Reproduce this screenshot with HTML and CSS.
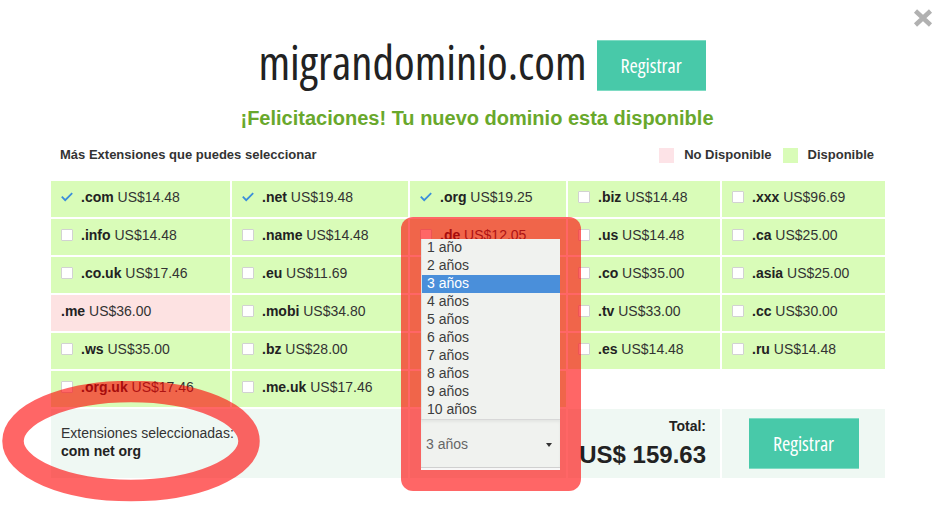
FILE: index.html
```html
<!DOCTYPE html>
<html lang="es">
<head>
    <meta charset="UTF-8">
    <title>Dominio disponible</title>
    <link rel="stylesheet" href="styles.css">
</head>
<body>
    <a class="close" href="#">
        <svg width="20" height="18" viewBox="0 0 20 18"><path d="M2.5 2 L17.5 16 M17.5 2 L2.5 16" stroke="#b1b1b1" stroke-width="4.5" fill="none"/></svg>
    </a>

    <div class="modal">
        <div class="head">
            <h1 class="domain">migrandominio.com</h1>
            <button class="btn">Registrar</button>
        </div>
        <p class="congrats">¡Felicitaciones! Tu nuevo dominio esta disponible</p>

        <div class="legend-row">
            <span>Más Extensiones que puedes seleccionar</span>
            <div class="legend">
                <span class="swatch no"></span><span>No Disponible</span>
                <span class="swatch yes"></span><span>Disponible</span>
            </div>
        </div>

        <!-- extension grid, row by row -->
        <div class="ext-grid">
            <div class="cell"><span class="tick"><svg width="12" height="12" viewBox="0 0 12 12"><path d="M0.8 5.6 L4.2 9.2 L11.2 2.2" stroke="#3a8edb" stroke-width="1.8" fill="none"/></svg></span><b>.com</b>&nbsp;US$14.48</div>
            <div class="cell"><span class="tick"><svg width="12" height="12" viewBox="0 0 12 12"><path d="M0.8 5.6 L4.2 9.2 L11.2 2.2" stroke="#3a8edb" stroke-width="1.8" fill="none"/></svg></span><b>.net</b>&nbsp;US$19.48</div>
            <div class="cell"><span class="tick"><svg width="12" height="12" viewBox="0 0 12 12"><path d="M0.8 5.6 L4.2 9.2 L11.2 2.2" stroke="#3a8edb" stroke-width="1.8" fill="none"/></svg></span><b>.org</b>&nbsp;US$19.25</div>
            <div class="cell"><span class="box"></span><b>.biz</b>&nbsp;US$14.48</div>
            <div class="cell"><span class="box"></span><b>.xxx</b>&nbsp;US$96.69</div>

            <div class="cell"><span class="box"></span><b>.info</b>&nbsp;US$14.48</div>
            <div class="cell"><span class="box"></span><b>.name</b>&nbsp;US$14.48</div>
            <div class="cell"><span class="box"></span><b>.de</b>&nbsp;US$12.05</div>
            <div class="cell"><span class="box"></span><b>.us</b>&nbsp;US$14.48</div>
            <div class="cell"><span class="box"></span><b>.ca</b>&nbsp;US$25.00</div>

            <div class="cell"><span class="box"></span><b>.co.uk</b>&nbsp;US$17.46</div>
            <div class="cell"><span class="box"></span><b>.eu</b>&nbsp;US$11.69</div>
            <div class="cell"></div>
            <div class="cell"><span class="box"></span><b>.co</b>&nbsp;US$35.00</div>
            <div class="cell"><span class="box"></span><b>.asia</b>&nbsp;US$25.00</div>

            <div class="cell taken"><b>.me</b>&nbsp;US$36.00</div>
            <div class="cell"><span class="box"></span><b>.mobi</b>&nbsp;US$34.80</div>
            <div class="cell"></div>
            <div class="cell"><span class="box"></span><b>.tv</b>&nbsp;US$33.00</div>
            <div class="cell"><span class="box"></span><b>.cc</b>&nbsp;US$30.00</div>

            <div class="cell"><span class="box"></span><b>.ws</b>&nbsp;US$35.00</div>
            <div class="cell"><span class="box"></span><b>.bz</b>&nbsp;US$28.00</div>
            <div class="cell"></div>
            <div class="cell"><span class="box"></span><b>.es</b>&nbsp;US$14.48</div>
            <div class="cell"><span class="box"></span><b>.ru</b>&nbsp;US$14.48</div>

            <div class="cell"><span class="box"></span><b>.org.uk</b>&nbsp;US$17.46</div>
            <div class="cell"><span class="box"></span><b>.me.uk</b>&nbsp;US$17.46</div>
            <div class="cell"></div>

            <!-- summary row -->
            <div class="sum sum-text">
                <span>Extensiones seleccionadas:</span>
                <b>com net org</b>
            </div>
            <div class="sum">
                <div class="select">
                    <ul class="options">
                        <li>1 año</li>
                        <li>2 años</li>
                        <li class="active">3 años</li>
                        <li>4 años</li>
                        <li>5 años</li>
                        <li>6 años</li>
                        <li>7 años</li>
                        <li>8 años</li>
                        <li>9 años</li>
                        <li>10 años</li>
                    </ul>
                    <div class="select-box">
                        <span>3 años</span>
                        <span class="caret"></span>
                    </div>
                </div>
            </div>
            <div class="sum total">
                <div class="total-label">Total:</div>
                <div class="total-value">US$ 159.63</div>
            </div>
            <div class="sum sum-btn">
                <button class="btn">Registrar</button>
            </div>
        </div>
    </div>

    <!-- review marks drawn over the page -->
    <div class="mark-box"></div>
    <svg class="mark-ring" width="270" height="130" viewBox="0 0 270 130">
        <ellipse cx="131" cy="60" rx="118" ry="49.5" fill="none" stroke="rgba(255,0,0,0.6)" stroke-width="21.5"/>
    </svg>
</body>
</html>
```

FILE: styles.css
```css
body {
    margin: 0;
    font-family: "Liberation Sans", Arial, sans-serif;
    color: #333;
    background: #fff;
}
.close {
    position: absolute;
    top: 9px;
    right: 3px;
    width: 20px;
    height: 18px;
}
.close svg {
    display: block;
}
.modal {
    width: 834px;
    margin: 0 auto;
    padding-top: 40px;
}
.head {
    display: flex;
    justify-content: center;
    align-items: flex-start;
    gap: 10px;
    padding-left: 28px;
}
.domain {
    margin: -3px 0 0;
    font-family: "Open Sans", sans-serif;
    font-stretch: 75%;
    font-weight: normal;
    font-size: 47px;
    line-height: 50px;
    color: #222;
}
.btn {
    width: 109px;
    height: 51px;
    border: none;
    background: #48c9a9;
    box-shadow: inset 0 1px #7edbc3, inset 0 -1px #7edbc3;
    color: #fff;
    font-family: "Open Sans", sans-serif;
    font-stretch: 75%;
    font-size: 20px;
    cursor: pointer;
}
.congrats {
    margin: 15px 0 0;
    padding-left: 18px;
    text-align: center;
    font-size: 20px;
    line-height: 24px;
    font-weight: bold;
    color: #69a82c;
}
.legend-row {
    display: flex;
    justify-content: space-between;
    align-items: center;
    margin-top: 17px;
    padding: 0 11px 0 9px;
    font-size: 13px;
    font-weight: bold;
    line-height: 16px;
}
.legend {
    display: flex;
    align-items: center;
}
.swatch {
    width: 15px;
    height: 15px;
    margin-right: 10px;
}
.swatch.no {
    background: #fde3e7;
}
.swatch.yes {
    background: #d9fcb8;
    margin-left: 11px;
}
.ext-grid {
    display: grid;
    grid-template-columns: 179px 176px 156px 152px 163px;
    grid-template-rows: repeat(6, 36px) 69px;
    gap: 2px;
    margin-top: 18px;
    font-size: 14px;
}
.cell {
    display: flex;
    align-items: center;
    padding: 0 0 4px 10px;
    background: #d9fcb8;
    white-space: nowrap;
}
.cell.taken {
    background: #fde2e2;
}
.cell b {
    color: #222;
}
.box,
.tick {
    width: 12px;
    height: 12px;
    margin-right: 8px;
    flex-shrink: 0;
}
.box {
    box-sizing: border-box;
    background: #fff;
    border: 1px solid #d2d2d2;
    border-radius: 1px;
}
.tick svg {
    display: block;
}
.sum {
    background: #eff8f3;
}
.sum-text {
    grid-column: 1 / span 2;
    display: flex;
    flex-direction: column;
    justify-content: center;
    padding: 0 0 4px 10px;
    line-height: 18px;
}
.sum-text b {
    color: #222;
}
.select {
    position: relative;
    z-index: 2;
    width: 139px;
    height: 51px;
    margin: 10px 0 0 11px;
    background: #f7f7f7;
}
.options {
    position: absolute;
    left: 0;
    bottom: 100%;
    width: 100%;
    box-sizing: border-box;
    margin: 0;
    padding: 0;
    list-style: none;
    background: #f0f2ef;
    border-left: 1px solid #e2e2e2;
    color: #3d3d3d;
}
.options li {
    height: 18px;
    line-height: 17px;
    padding-left: 5px;
}
.options li.active {
    background: #4a8fda;
    color: #fff;
}
.select-box {
    display: flex;
    justify-content: space-between;
    align-items: center;
    height: 47px;
    padding: 0 8px 0 5px;
    background: #f0f2ef;
    border-top: 1px solid #d8d8d8;
    border-bottom: 1px solid #d0d0d0;
    box-shadow: inset 0 2px 3px rgba(0, 0, 0, 0.05);
    color: #666;
}
.caret {
    width: 0;
    height: 0;
    border-left: 3px solid transparent;
    border-right: 3px solid transparent;
    border-top: 4px solid #333;
    margin-top: 2px;
}
.total {
    text-align: right;
    padding: 7px 14px 0 0;
    font-weight: bold;
    color: #222;
}
.total-label {
    line-height: 20px;
}
.total-value {
    margin-top: 4px;
    font-size: 24px;
    line-height: 30px;
}
.sum-btn {
    display: flex;
    justify-content: center;
    align-items: center;
}
.sum-btn .btn {
    width: 110px;
}
.mark-box {
    position: absolute;
    z-index: 1;
    left: 401px;
    top: 217px;
    width: 180px;
    height: 274px;
    border-radius: 12px;
    background: rgba(255, 0, 0, 0.6);
}
.mark-ring {
    position: absolute;
    z-index: 1;
    left: 0;
    top: 381px;
}
```
